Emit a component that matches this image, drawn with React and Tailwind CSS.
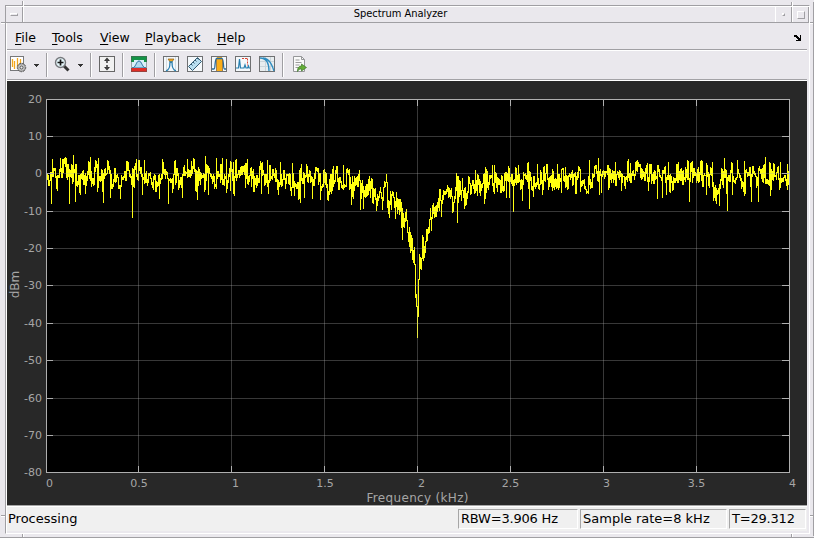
import React from 'react'

const LEFT = 46
const RIGHT = 789
const TOP = 99
const BOTTOM = 472

const xTicks = [
  { x: 46, label: '0', at: 49.5 },
  { x: 138, label: '0.5', at: 139 },
  { x: 231, label: '1', at: 235.5 },
  { x: 324, label: '1.5', at: 325 },
  { x: 417, label: '2', at: 421.5 },
  { x: 510, label: '2.5', at: 510.5 },
  { x: 603, label: '3', at: 606.5 },
  { x: 696, label: '3.5', at: 696.5 },
  { x: 789, label: '4', at: 792.5 },
]

const yTicks = [
  { y: 99, label: '20' },
  { y: 136, label: '10' },
  { y: 173, label: '0' },
  { y: 211, label: '-10' },
  { y: 248, label: '-20' },
  { y: 285, label: '-30' },
  { y: 323, label: '-40' },
  { y: 360, label: '-50' },
  { y: 398, label: '-60' },
  { y: 435, label: '-70' },
  { y: 472, label: '-80' },
]

// notch samples, one [top, bottom] pair per pixel column starting at 350
const notch = [
  [177, 188], [184, 204], [176, 196], [182, 198], [176, 190], [178, 185], [177, 184], [176, 186], [174, 186], [170, 180],
  [182, 209], [183, 198], [180, 192], [186, 208], [190, 196], [186, 197], [184, 196], [184, 195], [179, 194], [176, 190],
  [181, 197], [178, 188], [179, 202], [188, 203], [189, 196], [188, 199], [198, 210], [194, 205], [196, 200], [191, 197],
  [187, 192], [192, 198], [197, 209], [187, 200], [181, 186], [182, 186], [174, 181], [186, 207], [200, 213], [201, 217],
  [191, 204], [194, 209], [191, 195], [192, 197], [197, 207], [201, 218], [192, 206], [198, 213], [199, 209], [199, 214],
  [199, 211], [202, 227], [208, 239], [213, 226], [218, 227], [212, 221], [209, 220], [220, 232], [233, 241], [227, 246],
  [232, 252], [235, 250], [238, 259], [250, 262], [247, 264], [269, 297], [294, 306], [307, 337], [279, 316], [254, 278],
  [257, 268], [258, 269], [235, 258], [237, 260], [246, 257], [241, 252], [229, 241], [229, 240], [227, 233], [219, 232],
  [208, 218], [217, 230], [205, 218], [203, 213], [207, 217], [206, 216], [205, 216], [202, 211], [198, 207], [189, 210],
  [189, 200], [200, 216], [195, 203], [190, 199], [191, 194], [191, 194], [189, 193], [185, 191], [187, 197], [188, 196],
  [190, 198], [188, 196], [198, 212], [202, 211], [196, 202], [187, 198], [173, 190], [176, 222], [176, 202], [180, 196],
  [181, 194], [190, 200], [178, 190], [190, 197], [188, 208], [187, 205], [193, 204], [191, 198], [176, 192], [177, 183],
]

// strongest peaks and dips of the flat part, x: y
const spikes = {
  51: 203, 52: 159, 56: 188, 60: 158, 62: 159, 69: 203, 73: 155, 75: 201, 85: 193, 90: 157, 98: 158, 97: 191,
  103: 202, 110: 197, 120: 198, 126: 161, 132: 217, 135: 163, 142: 194, 144: 160, 159: 198, 162: 159, 168: 203,
  182: 197, 187: 159, 191: 161, 197: 199, 205: 156, 208: 194, 216: 158, 222: 158, 226: 159, 230: 190, 233: 162,
  245: 187, 247: 159, 251: 186, 261: 193, 262: 162, 267: 160, 268: 193, 280: 162, 277: 189, 292: 163, 294: 195,
  300: 202, 301: 164, 304: 197, 312: 198, 320: 199, 330: 191, 333: 166, 343: 165, 475: 170, 479: 192, 485: 167,
  486: 192, 492: 165, 494: 165, 497: 191, 506: 197, 509: 197, 513: 211, 518: 165, 522: 200, 527: 163, 529: 208,
  533: 196, 537: 164, 542: 194, 557: 164, 561: 192, 565: 167, 580: 191, 589: 160, 598: 158, 599: 194, 601: 192,
  615: 162, 621: 190, 630: 163, 636: 161, 648: 190, 651: 164, 657: 198, 662: 197, 666: 194, 668: 162, 678: 162,
  689: 201, 690: 163, 702: 161, 706: 194, 712: 162, 719: 205, 724: 158, 727: 210, 732: 194, 737: 160, 744: 161,
  751: 201, 758: 201, 765: 157, 770: 195, 780: 162, 787: 164,
}

function buildTrace() {
  let seed = 48271
  const rand = () => {
    seed = (seed * 16807) % 2147483647
    return seed / 2147483647
  }
  let prev = [170, 178]
  let drift = 0
  let last = 176
  let d = ''
  for (let x = LEFT; x < RIGHT; x++) {
    let top, bottom
    if (x >= 350 && x < 350 + notch.length) {
      ;[top, bottom] = notch[x - 350]
      last = bottom
    } else {
      const droop = x > 285 && x < 540 ? 4 : 0
      drift = drift * 0.7 + (rand() - 0.5) * 7
      const v = Math.round(176 + droop + drift + (rand() + rand() - 1) * 15)
      top = Math.min(v, last) - Math.floor(rand() * 3)
      bottom = Math.max(v, last) + Math.floor(rand() * rand() * 7)
      last = v
      const s = spikes[x]
      if (s && s < 175) top = s
      if (s && s >= 175) bottom = s
    }
    // keep neighbouring columns joined
    if (top > prev[1]) top = prev[1]
    if (bottom < prev[0]) bottom = prev[0]
    d += `M${x + 0.5} ${top}V${bottom + 1}`
    prev = [top, bottom]
  }
  return d
}

const trace = buildTrace()

function Plot() {
  return (
    <svg width="800" height="424" viewBox="7 81 800 424" className="block shrink-0" shapeRendering="crispEdges">
      <rect x="7" y="81" width="800" height="424" fill="#282828" />
      <rect x={LEFT} y={TOP} width={RIGHT - LEFT} height={BOTTOM - TOP} fill="#000" />
      <path d={trace} stroke="#ffff11" fill="none" />
      {xTicks.slice(1, -1).map((t) => (
        <g key={t.x} stroke="#afafaf">
          <path d={`M${t.x + 0.5} ${TOP}V${BOTTOM}`} strokeOpacity="0.32" />
          <path d={`M${t.x + 0.5} ${TOP}v7M${t.x + 0.5} ${BOTTOM}v-6`} />
        </g>
      ))}
      {yTicks.slice(1, -1).map((t) => (
        <g key={t.y} stroke="#afafaf">
          <path d={`M${LEFT} ${t.y + 0.5}H${RIGHT}`} strokeOpacity="0.32" />
          <path d={`M${LEFT} ${t.y + 0.5}h7M${RIGHT} ${t.y + 0.5}h-7`} />
        </g>
      ))}
      <rect x={LEFT + 0.5} y={TOP + 0.5} width={RIGHT - LEFT} height={BOTTOM - TOP} fill="none" stroke="#afafaf" />
      <g fill="#a6a6a6" fontFamily="'DejaVu Sans', sans-serif" fontSize="11">
        {xTicks.map((t) => (
          <text key={t.label} x={t.at} y="487" textAnchor="middle">{t.label}</text>
        ))}
        {yTicks.map((t) => (
          <text key={t.label} x="42" y={t.y + 4} textAnchor="end">{t.label}</text>
        ))}
        <text x="417.5" y="502" textAnchor="middle" fontSize="12" textLength="102">Frequency (kHz)</text>
        <text transform="translate(18.5 284.5) rotate(-90)" textAnchor="middle" fontSize="12">dBm</text>
      </g>
    </svg>
  )
}

function Icon({ children, className = '' }) {
  return (
    <svg width="18" height="18" viewBox="0 0 18 18" fill="none" className={`-mt-[2px] shrink-0 ${className}`}>
      {children}
    </svg>
  )
}

const Frame = ({ fill = '#f4f8fb' }) => (
  <rect x="1.5" y="1.5" width="15" height="15" fill={fill} stroke="#6f7072" />
)

const Separator = ({ className }) => (
  <div className={`h-[24px] w-[2px] shrink-0 border-l border-r border-l-[#9f9ea2] border-r-white ${className}`} />
)

const Arrow = ({ className }) => (
  <svg width="5" height="3" viewBox="0 0 5 3" className={`shrink-0 ${className}`} shapeRendering="crispEdges">
    <path d="M0 0h5v1H4v1H3v1H2V2H1V1H0z" fill="#333" />
  </svg>
)

function Toolbar() {
  return (
    <div className="flex h-[30px] w-[800px] border-b border-white">
      <div className="flex h-[29px] w-full items-center border-b border-[#a3a2a6]">
        <Icon className="ml-[2px]">
          <rect x="1.5" y="1.5" width="13" height="14" fill="#fff" stroke="#77787a" />
          <path d="M3.5 4v8M5.5 6v8M8.5 3v9M11.5 4v5" stroke="#f3a71c" strokeWidth="1.3" />
          <circle cx="12.5" cy="12.5" r="4.2" fill="#9b9b9b" stroke="#565656" strokeDasharray="2 .8" />
          <circle cx="12.5" cy="12.5" r="3" fill="#c9c9c9" />
          <circle cx="12.5" cy="12.5" r="1.5" fill="#eee" stroke="#555" />
        </Icon>
        <Arrow className="ml-[7px]" />
        <Separator className="ml-[7px]" />
        <Icon className="ml-[5px]">
          <path d="m10.5 10.5 5 5" stroke="#333" strokeWidth="3" />
          <circle cx="7.5" cy="7.5" r="5" fill="#e3f4f8" stroke="#77797d" strokeWidth="1.4" />
          <path d="M7.5 4.5v6M4.5 7.5h6" stroke="#151515" strokeWidth="1.7" />
        </Icon>
        <Arrow className="ml-[7px]" />
        <Separator className="ml-[7px]" />
        <Icon className="ml-[6px]">
          <rect x="1.5" y="1.5" width="15" height="15" fill="#f1f1f1" stroke="#666" />
          <path d="M9 2.5 12 6H6zM9 15.5 12 12H6z" fill="#333" />
          <path d="M9 4v4M9 10v4" stroke="#444" strokeWidth="1.6" />
        </Icon>
        <Separator className="ml-[6px]" />
        <Icon className="ml-[6px]">
          <rect x="1" y="1" width="16" height="16" fill="#d9f0f8" />
          <path d="M1 1h16v6h-3V5H4v2H1z" fill="#159447" />
          <path d="M2 13c4 0 4-7 7-7s3 7 7 7z" fill="#b2d9ef" stroke="#26709f" />
          <path d="M1 13h16v4H1z" fill="#df2e27" />
          <rect x="1.5" y="1.5" width="15" height="15" stroke="#555" strokeOpacity=".5" />
        </Icon>
        <Separator className="ml-[6px]" />
        <Icon className="ml-[6px]">
          <Frame />
          <path d="M4.5 2v14M13.5 2v14" stroke="#d5dce0" />
          <path d="M6 4h6L9.5 7.5h-1z" fill="#f3a71c" stroke="#8c5b14" strokeWidth=".7" />
          <path d="M4 16c3-1 4-3 4-9h2c0 6 1 8 4 9" stroke="#277eaf" strokeWidth="1.3" />
        </Icon>
        <Icon className="ml-[6px]">
          <Frame />
          <path d="M2.5 11.5 11.5 2.5l4 4-9 9z" fill="#b9dff1" stroke="#345b72" />
          <path d="m5 9 1.5 1.5M7 7l1.5 1.5M9 5l1.5 1.5M11 3l1.5 1.5" stroke="#345b72" />
        </Icon>
        <Icon className="ml-[6px]">
          <Frame />
          <path d="M7 2h5v14H7z" fill="#f9ad19" />
          <path d="M2 14h2c1.500 0 .5-9 2.500-10.500h5.500c2 1.500 1 10.500 2.500 10.500H16" stroke="#286b9b" strokeWidth="1.3" />
          <path d="M6.5 4v12M12.5 4v12" stroke="#896224" strokeWidth=".8" />
        </Icon>
        <Icon className="ml-[6px]">
          <Frame />
          <path d="M2 13h2.500l1-9 1 9H10l1-3 1 3h1.500l1-2 .5 2h1" stroke="#277eaf" strokeWidth="1.2" />
          <path d="M8 3.500h5M13.500 3.500v7" stroke="#db4432" strokeDasharray="2 1" />
        </Icon>
        <Icon className="ml-[6px]">
          <Frame fill="#e8edef" />
          <path d="M7.5 2v14M12.5 2v14M2 6.5h14M2 11.5h14" stroke="#cbd5da" />
          <path d="M2 3c7 0 9 6 9 13M5 3c7 1 9 7 11 13" stroke="#2e8cc0" strokeWidth="1.3" />
        </Icon>
        <Separator className="ml-[6px]" />
        <Icon className="ml-[7px]">
          <path d="M2.5 1.5h8l3 3v12h-11z" fill="#fafafa" stroke="#969799" />
          <path d="M10.5 1.5v3h3" stroke="#969799" />
          <path d="M4.5 5h4M4.5 7.5h6M4.5 10h4M4.5 12.5h3" stroke="#9a9a9a" />
          <path d="M6.500 16.500c0-4 1.500-5.500 4-5.500V9l5 3.500-5 3.500v-2c-2 0-3 .5-4 2.500z" fill="#65ad38" stroke="#3e792b" strokeWidth=".7" />
        </Icon>
      </div>
    </div>
  )
}

const MenuItem = ({ hotkey, rest, className }) => (
  <div className={className}>
    <span className="underline underline-offset-2">{hotkey}</span>{rest}
  </div>
)

function TitleBar() {
  return (
    <div className="flex h-[17px] w-[803px] border-t border-b border-t-white border-b-[#a09fa3]">
      <div className="flex w-[17px] items-center justify-center border-r border-[#a09fa3]">
        <div className="h-[3px] w-[8px] border border-t-white border-l-white border-r-[#a09fa3] border-b-[#a09fa3]" />
      </div>
      <div className="w-[752px] border-l border-white pl-[2px] text-center font-['DejaVu_Sans_Condensed','DejaVu_Sans',sans-serif] text-[11px] leading-[14px] tracking-[-0.05px]">
        Spectrum Analyzer
      </div>
      <div className="flex w-[17px] items-center justify-center border-l border-r border-l-white border-r-[#a09fa3]">
        <div className="h-[3px] w-[3px] border border-t-white border-l-white border-r-[#a09fa3] border-b-[#a09fa3]" />
      </div>
      <div className="flex w-[17px] items-center justify-center border-l border-r border-l-white border-r-[#a09fa3]">
        <div className="h-[8px] w-[8px] border border-t-white border-l-white border-r-[#a09fa3] border-b-[#a09fa3]" />
      </div>
    </div>
  )
}

const Status = ({ children, className }) => (
  <div className={`h-[20px] border border-t-[#a6a6a6] border-l-[#a6a6a6] border-r-white border-b-white pl-[2px] leading-[17px] whitespace-nowrap ${className}`}>
    {children}
  </div>
)

export default function App() {
  return (
    <div className="relative h-[538px] w-[814px] overflow-hidden border-b border-[#a09fa3] bg-[#eae8ed] pt-[5px] pl-[5px] font-['DejaVu_Sans',sans-serif] text-[13px] text-black">
      <div className="h-[529px] w-[805px] border border-t-[#a09fa3] border-r-white border-b-white border-l-[#a09fa3]">
        <TitleBar />
        <div className="h-[510px] border-l border-white">
          <div className="flex h-[28px] w-[800px] border-b border-white">
            <div className="flex h-[27px] w-full border-b border-[#a09fa3] pl-[8px] text-[12.5px] leading-[29px]">
              <MenuItem hotkey="F" rest="ile" className="w-[37px]" />
              <MenuItem hotkey="T" rest="ools" className="w-[48px]" />
              <MenuItem hotkey="V" rest="iew" className="w-[45px]" />
              <MenuItem hotkey="P" rest="layback" className="w-[72px]" />
              <MenuItem hotkey="H" rest="elp" />
              <svg width="8" height="6" viewBox="0 0 8 6" className="mt-[12px] mr-[5px] ml-auto" shapeRendering="crispEdges">
                <path d="M0 0h3v1h1v1h1v1h1V0h1v6H2V5h2V4H3V3H2V2H0z" fill="#000" />
              </svg>
            </div>
          </div>
          <Toolbar />
          <Plot />
          <div className="flex h-[26px] w-[800px] border-t border-[#a6a6a6] bg-[#f0f0f0]">
            <div className="flex w-full border-t border-white pt-[2px] pl-px">
              <div className="w-[450px] leading-[20px]">Processing</div>
              <Status className="w-[120px] tracking-[-0.2px]">RBW=3.906 Hz</Status>
              <Status className="ml-[2px] w-[147px]">Sample rate=8 kHz</Status>
              <Status className="ml-[2px] w-[77px] tracking-[-0.2px]">T=29.312</Status>
            </div>
          </div>
        </div>
      </div>

      {/* resize handle notches on the window frame */}
      <div className="absolute top-[1px] left-[22px] h-[5px] w-[2px] border-l border-r border-l-[#a09fa3] border-r-white" />
      <div className="absolute top-[2px] left-[791px] h-[4px] w-[2px] border-l border-r border-l-[#a09fa3] border-r-white" />
      <div className="absolute top-[22px] left-[1px] h-[2px] w-[4px] border-t border-b border-t-[#a09fa3] border-b-white" />
      <div className="absolute top-[22px] left-[810px] h-[2px] w-[4px] border-t border-b border-t-[#a09fa3] border-b-white" />
      <div className="absolute top-[515px] left-[1px] h-[2px] w-[4px] border-t border-b border-t-[#a09fa3] border-b-white" />
      <div className="absolute top-[515px] left-[810px] h-[2px] w-[4px] border-t border-b border-t-[#a09fa3] border-b-white" />
      <div className="absolute top-[534px] left-[22px] h-[4px] w-[2px] border-l border-r border-l-[#a09fa3] border-r-white" />
      <div className="absolute top-[534px] left-[791px] h-[4px] w-[2px] border-l border-r border-l-[#a09fa3] border-r-white" />
      <div className="absolute top-[2px] left-[813px] h-[534px] w-px bg-[#a09fa3]" />
    </div>
  )
}
